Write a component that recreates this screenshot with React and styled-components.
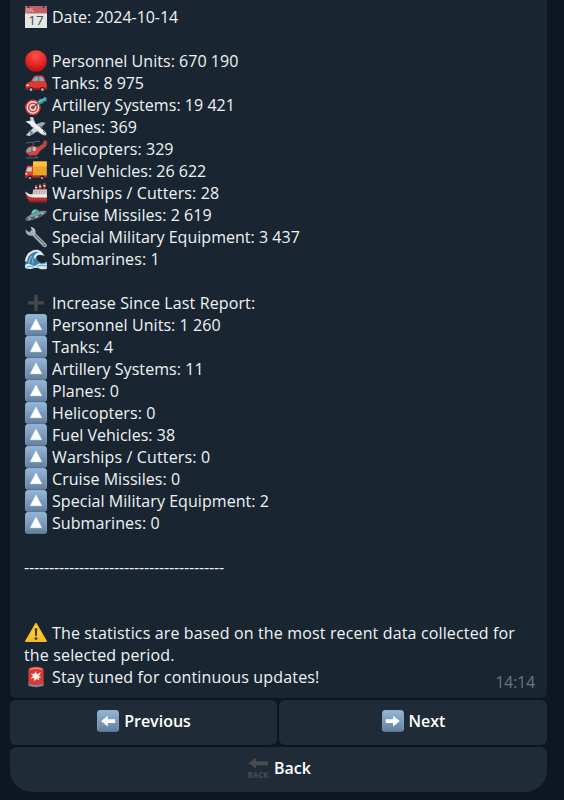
import React from 'react';
import styled, { createGlobalStyle } from 'styled-components';

const GlobalStyle = createGlobalStyle`
  * { box-sizing: border-box; }
  body {
    margin: 0;
    background: #0e1621;
    font-family: "Open Sans", "Noto Sans", sans-serif;
    font-size: 16px;
    overflow: hidden;
  }
`;

const Chat = styled.main`
  height: 800px;
  padding: 0 17px 8px 10px;
  display: flex;
  flex-direction: column;
  gap: 2px;
  background: linear-gradient(90deg, #0d1722 0, #0d1722 548px, #0d1520 564px);
`;

const Bubble = styled.article`
  height: 698px;
  flex: none;
  padding: 6px 12px 4px 14px;
  border-radius: 0 0 6px 6px;
  background: #192631;
  color: #f0f3f5;
  display: flex;
  flex-direction: column;
`;

const Line = styled.div`
  height: 22px;
  line-height: 22px;
  letter-spacing: ${(p) => p.$tracking || 0}px;
  display: flex;
  align-items: center;
  white-space: pre;
`;

const Emoji = styled.svg`
  width: 22px;
  height: 22px;
  flex: none;
  margin: 0 5px 0 1px;
  overflow: visible;
`;

const LastLine = styled(Line)`
  justify-content: space-between;
`;

const Inline = styled.span`
  display: flex;
  align-items: center;
`;

const Time = styled.time`
  color: #6c7883;
  font-size: 15.5px;
  letter-spacing: 0;
  transform: translateY(5px);
`;

const ButtonRow = styled.div`
  display: flex;
  gap: 2px;
`;

const Button = styled.button`
  flex: ${(p) => (p.$width ? `0 0 ${p.$width}px` : '1 1 0')};
  height: 45px;
  border: 0;
  padding: 0 0 3px;
  border-radius: ${(p) => (p.$last ? '6px 6px 22px 22px' : '6px')};
  background: #1f2c38;
  color: #fff;
  font: 600 16px/22px "Open Sans", "Noto Sans", sans-serif;
  display: flex;
  align-items: center;
  justify-content: center;
`;

const Caption = styled.text`
  font-family: "Open Sans", sans-serif;
  font-weight: ${(p) => p.$weight || 700};
  font-size: ${(p) => p.$size}px;
  letter-spacing: 0;
  line-height: 1;
  text-anchor: middle;
`;

function Tile({ children, id }) {
  return (
    <>
      <defs>
        <linearGradient id={id} x1="0" y1="0" x2="0" y2="1">
          <stop offset="0" stopColor="#91b5d8" />
          <stop offset="1" stopColor="#64819e" />
        </linearGradient>
      </defs>
      <rect width="22" height="22" rx="3.2" fill="#58728c" />
      <rect x=".4" y=".2" width="21.2" height="20.8" rx="3" fill="#a5c1da" />
      <rect x=".7" y="1" width="20.6" height="20.2" rx="2.7" fill={`url(#${id})`} />
      {children}
    </>
  );
}

const drawings = {
  calendar: (
    <>
      <rect y="1" width="22" height="21" fill="#e4e5e5" />
      <path d="M0 0h22v7.2H0z" fill="#bd6266" />
      <path d="M0 7.2h22v.8H0z" fill="#d8a1a2" />
      <circle cx="3.6" cy="1.2" r="1.1" fill="#602e35" />
      <circle cx="18.4" cy="1.2" r="1.1" fill="#602e35" />
      <Caption x="5" y="6.4" $size={4.5} fill="#e5b8b7">JUL</Caption>
      <Caption x="11" y="19.4" $size={13.5} $weight={500} fill="#484a4d">17</Caption>
    </>
  ),
  red: (
    <>
      <defs>
        <radialGradient id="redball" cx=".5" cy=".25" r=".75">
          <stop offset="0" stopColor="#fb5548" />
          <stop offset=".55" stopColor="#ea2a25" />
          <stop offset="1" stopColor="#b70d14" />
        </radialGradient>
      </defs>
      <circle cx="11" cy="11" r="10.8" fill="url(#redball)" />
    </>
  ),
  car: (
    <>
      <path d="M.4 14 2 11l4-1.8L8.3 5Q9.6 3.6 12 3.6h4.5q2.3 0 3.2 2.8l1 3.6 1 2.3v5H1Z" fill="#e63430" />
      <path d="m7.2 9 2.2-3.5q.6-.7 2-.7h1.8V9ZM14.2 4.8h2q1.6 0 2.2 1.7l.8 2.5h-5Z" fill="#62b9d8" />
      <path d="M.6 15.8h21v2H1Z" fill="#a91e22" />
      <path d="M1.6 12.4h3l-1 1.6H1z" fill="#fbd8b6" />
      <circle cx="6" cy="17.6" r="2.6" fill="#242a30" /><circle cx="6" cy="17.6" r="1.3" fill="#b5bfc6" />
      <circle cx="17.4" cy="17.6" r="2.6" fill="#242a30" /><circle cx="17.4" cy="17.6" r="1.3" fill="#b5bfc6" />
    </>
  ),
  target: (
    <>
      <circle cx="7.9" cy="13.4" r="7.8" fill="#d33b3b" />
      <circle cx="7.9" cy="13.4" r="6.3" fill="#f4e8e6" />
      <circle cx="7.9" cy="13.4" r="5" fill="#d43e3e" />
      <circle cx="7.9" cy="13.4" r="3.4" fill="#f5e7e5" />
      <circle cx="7.9" cy="13.4" r="1.9" fill="#cc2c31" />
      <path d="m8 13.3 6.5-5" stroke="#3c6170" strokeWidth="1.4" />
      <path d="m12.2 8 2.8-3.2 3.2.2 1.3-2.7.9 1.4 1.6.1-.6 1.7.6 1.4-3 .6-1.4 2-3.7.4Z" fill="#3d9aa6" />
      <path d="m14 7.9 6-3.6" stroke="#9bd6d6" strokeWidth=".9" />
    </>
  ),
  plane: (
    <>
      <path d="M7.5 9.5 17 6l3.7 1-6.5 6.2Z" fill="#9aa9b8" />
      <path d="M4.7 1.2 8 1l2.6 7-3.2 1Z" fill="#c7d1dc" />
      <path d="m.5 5.6 6.2-1.4 2 2L4 8Z" fill="#dfe5eb" />
      <path d="M4.2 5.3Q7 4 10 7.2l9.6 7.7q2.4 2.4 1.8 4.1-2.5.8-5.5-1L6.2 10.2Q3.8 7.5 4.2 5.3Z" fill="#eef1f4" />
      <path d="m7 10.7 9 7.1q2.7 1.6 5 1.1" fill="none" stroke="#8190a0" strokeWidth="1" />
      <path d="m9 11.2 4.4 3.4L4.8 20l-4-.8Z" fill="#cdd6df" />
      <path d="m3.7 14.8 3.5 1.7-2 2.2M15 10.2l2 2" fill="none" stroke="#66788c" strokeWidth="1.5" />
      <path d="m17.9 15 2 1.2-1.1.8" fill="none" stroke="#4b6177" strokeWidth=".9" />
    </>
  ),
  helicopter: (
    <>
      <path d="m1 5 14-1.8M8 4v4.2" stroke="#697177" strokeWidth=".8" />
      <path d="m10.5 10.6 8-5.2 1.2-2.8 1.7.3v5l-6.6 5.3Z" fill="#bd4947" />
      <path d="M.6 13.8Q2 8.4 7.4 8q4.9-.4 6.6 2.8 1.7 3.6-1.5 5.6-2 1.3-6.4 1Q1.7 17 .6 13.8Z" fill="#d94240" />
      <path d="M1.2 13.3q1-3.9 5-4.3v4.5q-2.5 1-5-.2Z" fill="#76a9be" />
      <path d="M7.7 9h3.1v4H7.7z" fill="#a5cbd6" />
      <path d="M5 17v2.6M11 16.8v2.4M.8 20q7 .5 12.8-.7" fill="none" stroke="#59656e" strokeWidth=".9" />
      <circle cx="20.1" cy="4.8" r="1.9" fill="none" stroke="#a64245" />
    </>
  ),
  truck: (
    <>
      <path d="M8 1.5h13.8v14.3H8z" fill="#eda22a" />
      <path d="M8 1.5h13.8v5H8z" fill="#ffc044" />
      <path d="M.4 12 2 5.8h6v12H.4Z" fill="#e23d2c" />
      <path d="M1.2 11.4 2.8 7.2h4.1v4.2Z" fill="#b5d8df" />
      <path d="M.3 15.5h21.4v2.3H.3Z" fill="#a8311f" />
      <path d="M.4 13h1.8v1.6H.4z" fill="#ffe4a2" />
      <circle cx="5" cy="18" r="2.6" fill="#252a30" /><circle cx="5" cy="18" r="1.1" fill="#aeb3b9" />
      <circle cx="17" cy="18" r="2.6" fill="#252a30" /><circle cx="17" cy="18" r="1.1" fill="#aeb3b9" />
    </>
  ),
  ship: (
    <>
      <path d="M10 3h2.3v5H10zM14 1.8h2.3V8H14zM18.2 1h2.3v7h-2.3z" fill="#a83b3d" />
      <path d="M10 4.8h2.3v1.4H10zM14 3.8h2.3v1.4H14zM18.2 3h2.3v1.4h-2.3z" fill="#ddd9d5" />
      <path d="M8.2 7.5H22v6H7.3z" fill="#d5d0ca" />
      <path d="M9 9.2h13M8.5 11h13.5" stroke="#8b8587" strokeWidth=".7" strokeDasharray="1.5 1" />
      <path d="M.2 11q4 2.2 8 2.2H22v7H4.6Q2 17 .2 11Z" fill="#bb3133" />
      <path d="M0 9.4q4 3 8 3.1h14v3H7.6Q2 15 0 9.4Z" fill="#f1ece6" />
      <path d="M3.7 18.4H22v1.8H4.7Z" fill="#8a202b" />
    </>
  ),
  ufo: (
    <>
      <path d="M.7 16.3q-1.4-1.8 4-5Q13 6.4 20.8 6.7q2.2.7-1 3.4-4 3.1-9.7 5Q3 17.6.7 16.3Z" fill="#8d9698" />
      <path d="M1 14.2Q11 13 21.6 7q.3 1.2-2.8 3.8Q10 16.1 1 16.4-.2 15.5 1 14.2Z" fill="#505d63" />
      <path d="M6.2 11Q6 6.3 9.8 5.2q4-.4 4.6 3.4Q11 11.4 6.2 11Z" fill="#42aaa0" />
      <path d="M7.5 8.8q.5-2.2 3-2.6" stroke="#a1ebdf" fill="none" />
      <path d="m3 15.2 3-.6M10 13.4l3-1.3M16.6 10.2l2-1.1" stroke="#cbd2d0" strokeWidth="1.1" />
    </>
  ),
  wrench: (
    <>
      <path d="M5.6.8 8.8 2q2.3 2 1.5 5.1l11.1 11q1.1 1.5-.3 2.8-1.7 1-3-.4L7.3 9.5q-3.4.7-5.5-1.4Q.2 6.3.7 3.4l3.4 2.9L6.8 4Z" fill="#a5adb3" />
      <path d="m9.7 8.8 9 8.9" stroke="#636c74" strokeWidth="1.1" />
      <path d="M6 1.3 9 3q1.4 2 .8 4.4" stroke="#d5d9dc" fill="none" strokeWidth=".8" />
      <circle cx="19.4" cy="19.1" r=".8" fill="#303c46" />
    </>
  ),
  wave: (
    <>
      <path d="M.2 20Q-.3 9 4.3 5q4.6-4.6 9.7-2.2 3.3 1.8 3.4 4.8-2.8-1.2-4.5 0-2 1.8-.8 4.5Q14.3 16 21.8 15v5Z" fill="#3d7eac" />
      <path d="M.8 13.3Q2 5.7 8 3.4q5.6-2 9 2.6-3.5-1-5.7.7-1.7 1.5-1.5 3.6" fill="none" stroke="#dce9ef" strokeWidth="2.1" />
      <path d="M4 15.4q.2-5.3 3.4-7.6M8.2 15.4q-1.2-2.5-.4-4.7" fill="none" stroke="#86bad6" strokeWidth="1.1" />
      <path d="M.1 17q3-2.2 6-.3 3 2 5.5.2 2.4-2 4.7-.9l5.5-2v6.7q-4 1-7 0-4-1.8-7.5 0-3.5 1-7.2-.6Z" fill="#d7e7ee" />
      <path d="M1.7 19q4-1.8 7 .2M12 18.4q4-2 9-.5M16 15.7q3 0 5.5-.8" fill="none" stroke="#4e91be" strokeWidth=".9" />
    </>
  ),
  plus: <path d="M9.4 2.8h3.3V9.3h6.3v3.3h-6.3v6.3H9.4v-6.3H3V9.3h6.4z" fill="#46494c" />,
  up: <Tile id="tile-up"><path d="m11 5 5.7 10.7H5.3Z" fill="#fff" stroke="#fff" strokeWidth=".5" strokeLinejoin="round" /></Tile>,
  left: <Tile id="tile-left"><path d="M4.2 11 10.8 5.8v3.5h7.4v3.6h-7.4v3.5Z" fill="#fff" /></Tile>,
  right: <Tile id="tile-right"><path d="m17.8 11-6.6-5.2v3.5H3.8v3.6h7.4v3.5Z" fill="#fff" /></Tile>,
  warning: (
    <>
      <defs><linearGradient id="warn" x1="0" y1="0" x2="0" y2="1"><stop stopColor="#ffe253" /><stop offset="1" stopColor="#f4b81e" /></linearGradient></defs>
      <path d="M11 1.6 21.2 19.2H.8Z" fill="url(#warn)" stroke="#f3be24" strokeWidth="1.5" strokeLinejoin="round" />
      <path d="M9.7 6.4q1.3-1 2.6 0L11.8 14h-1.6Z" fill="#40361f" />
      <circle cx="11" cy="16.6" r="1.4" fill="#40361f" />
    </>
  ),
  siren: (
    <>
      <path d="M3.4 16.5h15.2v3.3q-7.6 2.8-15.2 0Z" fill="#7b858f" />
      <path d="M3.4 4Q3.6.8 11 .8T18.6 4v13.6q-7.6 2.6-15.2 0Z" fill="#da3938" />
      <path d="M4.8 3.8Q11 .6 17.2 3.8" stroke="#f78f87" fill="none" strokeWidth="1.2" />
      <path d="m10.7 5 1.1 3.4 4.1-2.3-2 3.8 2.3 1-2.7 1 1 2.4-3-1.3-2.3 2.2V12l-3.7.4 2.6-2.3-2.2-2.3 3.3.3Z" fill="#fff0e9" />
    </>
  ),
  back: (
    <>
      <path d="M1.5 6.2 9 .8v3.4h12v4H9v3.4Z" fill="#494b4d" />
      <Caption x="11" y="20.7" $size={8} fill="#494b4d" textLength="21" lengthAdjust="spacingAndGlyphs">BACK</Caption>
    </>
  ),
};

const Icon = ({ name }) => (
  <Emoji viewBox="0 0 22 22" aria-hidden="true">{drawings[name]}</Emoji>
);

/* icon, text, letter spacing */
const lines = [
  ['calendar', 'Date: 2024-10-14', -0.06],
  [],
  ['red', 'Personnel Units: 670 190', 0.04],
  ['car', 'Tanks: 8 975', -0.06],
  ['target', 'Artillery Systems: 19 421', 0.04],
  ['plane', 'Planes: 369'],
  ['helicopter', 'Helicopters: 329', 0.06],
  ['truck', 'Fuel Vehicles: 26 622'],
  ['ship', 'Warships / Cutters: 28', 0.13],
  ['ufo', 'Cruise Missiles: 2 619', 0.04],
  ['wrench', 'Special Military Equipment: 3 437', 0.03],
  ['wave', 'Submarines: 1', 0.08],
  [],
  ['plus', 'Increase Since Last Report:', 0.12],
  ['up', 'Personnel Units: 1 260', 0.07],
  ['up', 'Tanks: 4'],
  ['up', 'Artillery Systems: 11', 0.06],
  ['up', 'Planes: 0', 0.06],
  ['up', 'Helicopters: 0', 0.08],
  ['up', 'Fuel Vehicles: 38', 0.03],
  ['up', 'Warships / Cutters: 0', 0.14],
  ['up', 'Cruise Missiles: 0', 0.06],
  ['up', 'Special Military Equipment: 2', 0.06],
  ['up', 'Submarines: 0', 0.08],
  [],
  [null, '----------------------------------------', -0.15],
  [],
  [],
  ['warning', 'The statistics are based on the most recent data collected for', 0.145],
  [null, 'the selected period.', 0.15],
];

export default function App() {
  return (
    <>
      <GlobalStyle />
      <Chat>
        <Bubble>
          {lines.map(([icon, text, tracking], i) => (
            <Line key={i} $tracking={tracking}>
              {icon && <Icon name={icon} />}
              {text}
            </Line>
          ))}
          <LastLine $tracking={0.16}>
            <Inline><Icon name="siren" />Stay tuned for continuous updates!</Inline>
            <Time>14:14</Time>
          </LastLine>
        </Bubble>
        <ButtonRow>
          <Button $width={267}><Icon name="left" />Previous</Button>
          <Button><Icon name="right" />Next</Button>
        </ButtonRow>
        <ButtonRow>
          <Button $last><Icon name="back" />Back</Button>
        </ButtonRow>
      </Chat>
    </>
  );
}
